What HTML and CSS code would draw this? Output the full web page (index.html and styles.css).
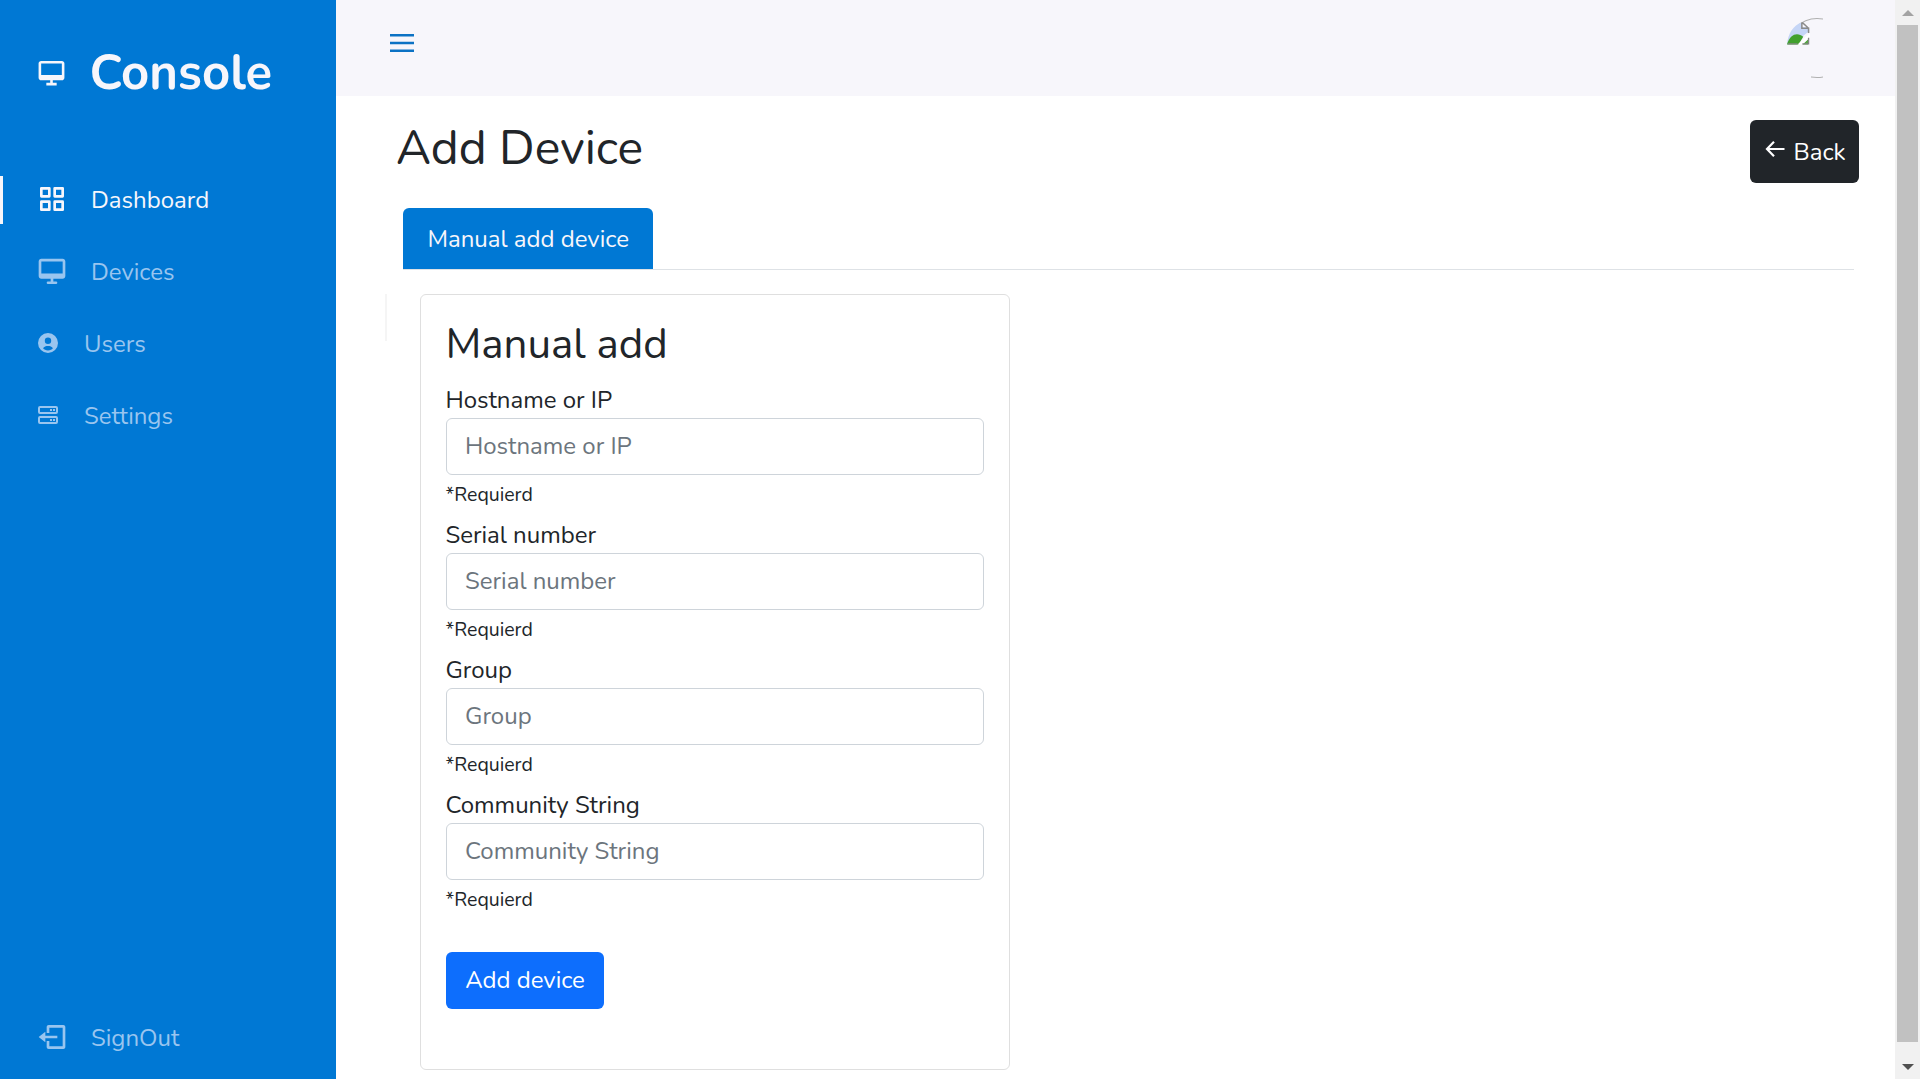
FILE: index.html
```html
<!DOCTYPE html>
<html lang="en">
<head>
<meta charset="utf-8">
<title>Console</title>
<link rel="stylesheet" href="styles.css">
</head>
<body>
<div class="app">
  <nav class="sidebar">
    <a class="logo">
      <svg class="icon-logo" viewBox="0 0 24 24"><path d="M20 3H4c-1.1 0-2 .9-2 2v11c0 1.1.9 2 2 2h7v2H8v2h8v-2h-3v-2h7c1.100 0 2-.9 2-2V5c0-1.100-.9-2-2-2zM4 14V5h16v9H4z"/></svg>
      <span class="logo-name">Console</span>
    </a>
    <a class="nav-link active">
      <svg class="icon" viewBox="0 0 24 24"><path d="M10 3H4a1 1 0 0 0-1 1v6a1 1 0 0 0 1 1h6a1 1 0 0 0 1-1V4a1 1 0 0 0-1-1zM9 9H5V5h4v4zm11-6h-6a1 1 0 0 0-1 1v6a1 1 0 0 0 1 1h6a1 1 0 0 0 1-1V4a1 1 0 0 0-1-1zm-1 6h-4V5h4v4zm-9 4H4a1 1 0 0 0-1 1v6a1 1 0 0 0 1 1h6a1 1 0 0 0 1-1v-6a1 1 0 0 0-1-1zm-1 6H5v-4h4v4zm11-6h-6a1 1 0 0 0-1 1v6a1 1 0 0 0 1 1h6a1 1 0 0 0 1-1v-6a1 1 0 0 0-1-1zm-1 6h-4v-4h4v4z"/></svg>
      <span>Dashboard</span>
    </a>
    <a class="nav-link">
      <svg class="icon" viewBox="0 0 24 24"><path d="M20 2.800H4c-1.100 0-2 .9-2 2v11c0 1.100.9 2 2 2h7v2H9a1 1 0 0 0 0 2h6a1 1 0 0 0 0-2h-2v-2h7c1.100 0 2-.9 2-2v-11c0-1.100-.9-2-2-2zM4 13.800v-9h16v9H4z"/></svg>
      <span>Devices</span>
    </a>
    <a class="nav-link">
      <svg class="icon-small" viewBox="0 0 24 24"><path fill-rule="evenodd" d="M12 2a10 10 0 1 0 0 20 10 10 0 0 0 0-20zm0 4.500a3.200 3.200 0 1 1 0 6.400 3.200 3.200 0 0 1 0-6.400zm0 13c-2.200 0-3.800-.9-4.900-2.200.9-1.700 2.800-2.300 4.900-2.300s4 .6 4.900 2.300c-1.100 1.300-2.700 2.200-4.900 2.200z"/></svg>
      <span>Users</span>
    </a>
    <a class="nav-link">
      <svg class="icon-small" viewBox="0 0 24 24"><path fill-rule="evenodd" d="M20 3H4a2 2 0 0 0-2 2v4a2 2 0 0 0 2 2h16a2 2 0 0 0 2-2V5a2 2 0 0 0-2-2zM4 9V5h16v4H4zm16 4H4a2 2 0 0 0-2 2v4a2 2 0 0 0 2 2h16a2 2 0 0 0 2-2v-4a2 2 0 0 0-2-2zM4 19v-4h16v4H4zM14 6h2v2h-2zM17 6h2v2h-2zM14 16h2v2h-2zM17 16h2v2h-2z"/></svg>
      <span>Settings</span>
    </a>
    <a class="nav-link signout">
      <svg class="icon" viewBox="0 0 24 24"><path d="m2 12 5 4v-3h9v-2H7V8z"/><path d="M20 3H9.500c-.8 0-1.500.7-1.500 1.500V9h2V5h10v14H10v-4H8v4.500c0 .8.700 1.500 1.500 1.500H20.500c.8 0 1.500-.7 1.500-1.500v-15C22 3.700 21.300 3 20.500 3z"/></svg>
      <span>SignOut</span>
    </a>
  </nav>
  <div class="page">
    <header class="header">
      <svg class="toggle" viewBox="0 0 24 18"><path d="M0 0h24v2.600H0zM0 7.700h24v2.600H0zM0 15.400h24V18H0z"/></svg>
      <div class="avatar">
        <svg class="broken" viewBox="0 0 24 24"><path d="M0 24C1 12 7 4 15 1v5h7v5L9 21z" fill="#c5d5f6"/><path d="M0 24C3 13 11 11 17 16l-5 8z" fill="#41a02d"/><path d="m16 24 6-5.500V24z" fill="#55a742"/><path d="M11 24 24 12v4.500L16 24z" fill="#fff"/><path d="M15.500 1.500V7h7v5M15 1.500h1.500L22.500 7" fill="none" stroke="#8b8b8b" stroke-width="1.600"/><path d="M1 23.300h10M16 23.300h6.500V17" fill="none" stroke="#858585" stroke-width="1.400"/></svg>
      </div>
    </header>
    <main class="main">
      <div class="title-row">
        <h1 class="title">Add Device</h1>
        <a class="back"><svg class="arrow" viewBox="0 0 20 16"><path d="M9 .800 2 8l7 7.200M2 8H19.500" fill="none" stroke="currentColor" stroke-width="2.200"/></svg>Back</a>
      </div>
      <div class="tabs"><a class="tab">Manual add device</a></div>
      <div class="tab-content">
        <div class="divider"></div>
        <form class="card">
          <h3 class="card-title">Manual add</h3>
          <label class="label">Hostname or IP</label>
          <input class="input" type="text" placeholder="Hostname or IP">
          <small class="hint">*Requierd</small>
          <label class="label">Serial number</label>
          <input class="input" type="text" placeholder="Serial number">
          <small class="hint">*Requierd</small>
          <label class="label">Group</label>
          <input class="input" type="text" placeholder="Group">
          <small class="hint">*Requierd</small>
          <label class="label">Community String</label>
          <input class="input" type="text" placeholder="Community String">
          <small class="hint">*Requierd</small>
          <button class="submit" type="button">Add device</button>
        </form>
      </div>
    </main>
  </div>
  <div class="scrollbar">
    <svg class="scroll-arrow" viewBox="0 0 12 6"><path d="M0 6 6 0l6 6z" fill="#a3a3a3"/></svg>
    <div class="thumb"></div>
    <svg class="scroll-arrow" viewBox="0 0 12 6"><path d="M0 0h12L6 6z" fill="#505050"/></svg>
  </div>
</div>
</body>
</html>
```
FILE: styles.css
```css
*{box-sizing:border-box}
body{margin:0;overflow:hidden;font-family:Nunito,Lato,sans-serif;font-size:24px;line-height:36px;color:#212529;background:#fff}
h1,h3{margin:0;font-weight:400;line-height:1.2}
.app{display:flex;height:1079px}
.sidebar{display:flex;flex-direction:column;gap:24px;width:336px;padding:24px 0 17px;background:#0078d4;flex:none}
.logo{display:flex;align-items:center;gap:23px;height:98px;margin-bottom:30px;padding-left:35.500px;color:#f7f6fb}
.logo-name{font-size:49px;font-weight:700}
.icon-logo{width:31px;height:31px;margin-top:-2px;fill:currentColor}
.nav-link{display:flex;align-items:center;gap:23px;height:48px;padding-left:36px;color:#99c5ef}
.nav-link.active{padding-left:33px;border-left:3px solid #f7f6fb;color:#f7f6fb}
.signout{margin-top:auto}
.icon{width:32px;height:32px;margin-top:-2px;fill:currentColor}
.icon-small{width:24px;height:24px;margin:-2px 1px 0 0;fill:currentColor}
.page{flex:1;min-width:0}
.header{display:flex;justify-content:space-between;align-items:flex-start;height:96px;padding:18px 48px 0 54px;background:#f7f6fb}
.toggle{width:24px;height:18px;margin-top:16px;fill:#0c72c4}
.avatar{width:60px;height:60px;padding:2px 0 0;border:1px solid #b0b0b0;border-radius:50%;clip-path:polygon(0 0,36px 0,36px 100%,24px 100%,24px 30px,0 30px);border-left-color:transparent;border-right-color:transparent}
.broken{display:block;width:23px;height:24px;margin-left:-1px}
.main{padding:24px 36px 0 49px}
.title-row{display:flex;justify-content:space-between;align-items:flex-start;height:88px}
.title{padding-left:11px;font-size:48px;line-height:56px}
.back{display:flex;align-items:center;gap:8.500px;width:109px;height:63px;padding-left:15px;border-radius:6px;background:#212529;color:#fff}
.arrow{width:20px;height:16px;margin-top:-5px}
.tabs{display:flex;height:62px;margin:0 5px 0 18px;border-bottom:1px solid #dee2e6}
.tab{width:250px;height:61px;padding:13px 0 0 24.5px;white-space:nowrap;border-radius:6px 6px 0 0;background:#0078d4;color:#f7f6fb}
.tab-content{display:flex;gap:34px;padding-top:24px}
.divider{width:2px;height:47px;background:#f5f5f5}
.card{display:flex;flex-direction:column;width:590px;height:776px;margin-left:-1px;padding:24px 25px;border:1px solid #dfdfdf;border-radius:6px}
.card-title{height:50px;margin-bottom:13px;padding-top:1px;font-size:42px}
.card-title,.label,.hint{text-indent:-.6px}
.label{height:36px}
.input{width:538px;height:57px;padding:0 18px 2px;border:1px solid #ced4da;border-radius:6px;font:inherit;color:#212529;background:#fff}
.input::placeholder{color:#6c757d;opacity:1}
.hint{height:42px;padding-top:2px;font-size:19.5px}
.submit{align-self:flex-start;width:158px;height:57px;margin-top:30px;padding:0 0 2px;border:0;border-radius:6px;background:#0d6efd;color:#fff;font:inherit}
.scrollbar{display:flex;flex-direction:column;align-items:center;width:25px;padding:10px 2px 9px;background:#f1f1f1}
.scroll-arrow{width:12px;height:6px}
.thumb{width:21px;height:1017px;margin:9px 0 22px;background:#c1c1c1}
```
